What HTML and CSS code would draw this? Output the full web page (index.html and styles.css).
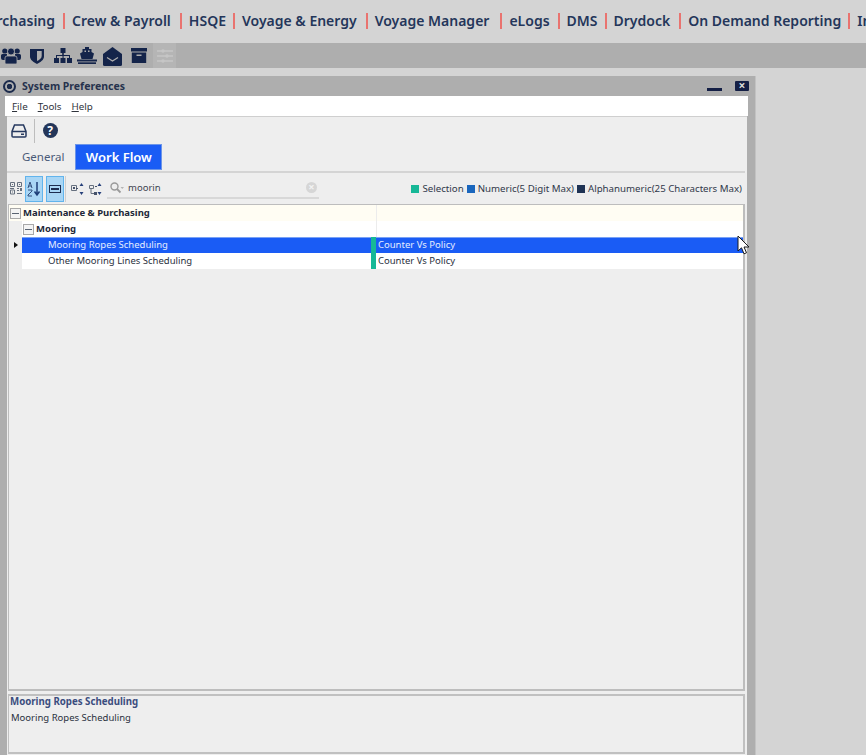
FILE: index.html
```html
<!DOCTYPE html>
<html>
  <head>
    <meta charset='utf-8'>
    <title>System Preferences</title>
    <link rel="stylesheet" href="styles.css">
  </head>
  <body>
    <nav class="topnav">
      <a class="first">Purchasing</a>
      <a class="pad9">Crew &amp; Payroll</a>
      <a>HSQE</a>
      <a class="pad9">Voyage &amp; Energy</a>
      <a class="pad11">Voyage Manager</a>
      <a class="pad8">eLogs</a>
      <a>DMS</a>
      <a class="pad9">Drydock</a>
      <a>On Demand Reporting</a>
      <a>Inventory</a>
    </nav>

    <div class="modules">
      <svg class="mod m-people" width="20" height="18" viewBox="0 0 20 18"><circle cx="3.800" cy="4" r="2.600"/><circle cx="16.200" cy="4" r="2.600"/><path d="M0 8.500q0-1.500 1.500-1.500h4.500v6H2q-2 0-2-2zM20 8.500q0-1.500-1.500-1.500H14v6h4q2 0 2-2z"/><path d="M6 9h8q2 0 2 2v5q0 1-1 1H5q-1 0-1-1v-5q0-2 2-2z" stroke="#aeaeae" stroke-width=".8"/><circle cx="10" cy="4.500" r="3.500" stroke="#aeaeae" stroke-width=".8"/></svg>
      <svg class="mod m-shield" width="14" height="16" viewBox="0 0 14 16"><path fill-rule="evenodd" d="M0 1h14v7.500c0 3.500-3.500 5.500-7 7.500-3.500-2-7-4-7-7.500zM7 3v10c2-1 4.700-2.500 4.700-5V3z"/></svg>
      <svg class="mod m-tree" width="18" height="15" viewBox="0 0 18 15"><path d="M6.500 0h5v5H9.800v2H16v3h2v5h-5v-5h2V8H9.600v2H11.500v5h-5v-5h2V8H3v2h2v5H0v-5h2V7h6.200V5H6.500z"/></svg>
      <svg class="mod m-ship" width="20" height="17" viewBox="0 0 20 17"><path fill-rule="evenodd" d="M8 0h4v2h2.500v3L17 6.500 15.500 12h-11L3 6.500 5.500 5V2H8zM7.500 3.500v1.500h1.500V3.500zM11 3.500v1.500h1.500V3.500z"/><rect x="0" y="12.500" width="20" height="2"/><rect x="1" y="15.300" width="18" height="1.700"/></svg>
      <svg class="mod m-mail" width="19" height="20" viewBox="0 0 19 20"><path d="M0 8l9.500-7L19 8v10.500a1.500 1.500 0 0 1-1.500 1.500h-16A1.500 1.500 0 0 1 0 18.500z"/><path d="M4 11.500l5.500 3.500 5.500-3.500" fill="none" stroke="#aeaeae" stroke-width="1.300"/></svg>
      <svg class="mod m-box" width="16" height="15" viewBox="0 0 16 15"><rect x="0" y="0" width="16" height="3.500"/><path fill-rule="evenodd" d="M.800 4.500h14.400V15H.800zM5.500 6.500v1.500h5V6.500z"/></svg>
      <span class="mod-off">
        <svg width="16" height="14" viewBox="0 0 16 14"><path d="M0 2h16M0 7h16M0 12h16" stroke="#c6c6c6" stroke-width="1.300"/><circle cx="6" cy="2" r="1.800" fill="#c6c6c6"/><circle cx="10" cy="7" r="1.800" fill="#c6c6c6"/><circle cx="6" cy="12" r="1.800" fill="#c6c6c6"/></svg>
      </span>
    </div>

    <div class="window">
      <div class="titlebar">
        <span class="ring"></span>
        <span class="title">System Preferences</span>
        <span class="min"></span>
        <span class="close">&#215;</span>
      </div>

      <div class="menubar">
        <span><u>F</u>ile</span>
        <span><u>T</u>ools</span>
        <span><u>H</u>elp</span>
      </div>

      <div class="content">
        <div class="tools">
          <svg width="16" height="14" viewBox="0 0 16 14"><path d="M3.500 1h9l2.500 6.500V12a1 1 0 0 1-1 1H2a1 1 0 0 1-1-1V7.500zM1 7.500h14" fill="none" stroke="#26395f" stroke-width="1.500"/><rect x="10" y="9.500" width="3" height="1.500" fill="#26395f"/></svg>
          <span class="vsep"></span>
          <span class="help">?</span>
        </div>

        <div class="tabs">
          <span class="tab">General</span>
          <span class="tab active">Work Flow</span>
        </div>

        <div class="filterbar">
          <span class="tbtn">
            <svg width="12" height="13" viewBox="0 0 12 13"><path d="M.5.500h4v4h-4zM.5 8h4v4h-4zM7.500.500h4v4h-4z" fill="none" stroke="#66707f"/><path d="M2 2h1v1H2zM2 9.500h1v1H2zM9 2h1v1H9zM7 6h2v1H7zM10 6h2v3h-2zM7 8h2v1H7zM7 11h5v1H7zM0 6h4v1H0z" fill="#66707f"/></svg>
          </span>
          <span class="tbtn on">
            <svg width="14" height="16" viewBox="0 0 14 16"><path d="M1 7l2-6 2 6M1.700 5h2.600M1 9h4v1L1 14v1h4" fill="none" stroke="#34507e"/><path d="M10 1v12M7.500 10.500l2.500 3.500 2.500-3.500" fill="none" stroke="#1f3f78" stroke-width="1.500"/></svg>
          </span>
          <span class="tbtn on">
            <svg width="12" height="8" viewBox="0 0 12 8"><rect x=".5" y=".5" width="11" height="7" fill="none" stroke="#1d2d50"/><path d="M2 3h8v2H2z" fill="#1d2d50"/></svg>
          </span>
          <span class="vsep short"></span>
          <svg class="ticon" width="13" height="14" viewBox="0 0 13 14"><path d="M.5 3.500h5v5h-5z" fill="none" stroke="#66707f"/><path d="M2 5h2v2H2zM5 6h2v1H5z" fill="#46526a"/><path d="M10.500 1l2 3h-4zM10.500 13l2-3h-4z" fill="#27407a"/></svg>
          <svg class="ticon" width="13" height="14" viewBox="0 0 13 14"><path d="M.5 3.500h4v3h-4zM2 6.500v5h3" fill="none" stroke="#66707f"/><path d="M6 4h2v1H6zM5 10h3v3H5z" fill="#46526a"/><path d="M10.500 1l2 3h-4zM10.500 13l2-3h-4z" fill="#27407a"/></svg>
          <div class="search">
            <svg width="14" height="12" viewBox="0 0 14 12"><circle cx="4.500" cy="4.500" r="3.500" fill="none" stroke="#9a9a9a" stroke-width="1.400"/><path d="M7 7l3.500 3.500" stroke="#9a9a9a" stroke-width="1.800"/><path d="M10.500 5h3.500l-1.750 2z" fill="#b4b4b4"/></svg>
            <span class="query">moorin</span>
            <span class="clear">&#215;</span>
          </div>
          <div class="legend">
            <i class="sw green"></i><span>Selection</span>
            <i class="sw blue"></i><span>Numeric(5 Digit Max)</span>
            <i class="sw navy"></i><span>Alphanumeric(25 Characters Max)</span>
          </div>
        </div>

        <div class="grid">
          <div class="row group">
            <div class="c1"><span class="box"></span><b>Maintenance &amp; Purchasing</b></div>
            <div class="c2"></div>
          </div>
          <div class="row sub">
            <div class="c1"><span class="box"></span><b>Mooring</b></div>
            <div class="c2"></div>
          </div>
          <div class="row item selected">
            <span class="arrow"></span>
            <div class="c1">Mooring Ropes Scheduling</div>
            <div class="c2">Counter Vs Policy</div>
          </div>
          <div class="row item">
            <div class="c1">Other Mooring Lines Scheduling</div>
            <div class="c2">Counter Vs Policy</div>
          </div>
        </div>

        <div class="desc">
          <div class="desc-title">Mooring Ropes Scheduling</div>
          <div class="desc-text">Mooring Ropes Scheduling</div>
        </div>
      </div>
    </div>

    <svg class="cursor" width="13" height="20" viewBox="0 0 13 20"><path d="M1 1v15l3.500-3.200 2.500 6 2.500-1-2.500-5.800h5z" fill="#fff" stroke="#1a1a1a" stroke-width="1"/></svg>
  </body>
</html>
```

FILE: styles.css
```css
* {
    box-sizing: border-box;
}
html, body {
    height: 100%;
}
body {
    margin: 0;
    height: 755px;
    overflow: hidden;
    position: relative;
    background: #d4d4d4;
    font-family: "Noto Sans", "Open Sans", sans-serif;
    font-size: 10px;
    color: #2a3140;
    display: flex;
    flex-direction: column;
}

/* top nav */
.topnav {
    height: 43px;
    flex: none;
    display: flex;
    align-items: center;
    white-space: nowrap;
    margin-left: -29px;
    padding-bottom: 2px;
    font-size: 14px;
    font-weight: 600;
    color: #24365a;
}
.topnav a {
    border-left: 2px solid #e9736f;
    height: 16px;
    line-height: 16px;
    padding: 0 7px;
}
.topnav a.first {
    border-left: 0;
    padding: 0 8px;
}
.topnav a.pad8 {
    padding-right: 8px;
}
.topnav a.pad9 {
    padding-right: 9px;
}
.topnav a.pad11 {
    padding-right: 11px;
}

/* module icons */
.modules {
    height: 25px;
    flex: none;
    background: #aeaeae;
    display: flex;
    align-items: center;
    padding-left: 1px;
}
.mod {
    fill: #14244a;
    flex: none;
}
.m-people {
    margin-right: 9px;
}
.m-shield {
    margin-right: 10px;
}
.m-tree {
    margin-right: 5px;
}
.m-ship {
    margin-right: 6px;
}
.m-mail {
    margin-right: 9px;
}
.m-box {
    margin-right: 6px;
}
.mod-off {
    width: 23px;
    height: 25px;
    background: #b5b5b5;
    display: flex;
    align-items: center;
    justify-content: center;
}

/* window */
.window {
    margin-top: 8px;
    width: 756px;
    flex: 1;
    background: #aeaeae;
    border-right: 1px solid #c2c2c2;
    display: flex;
    flex-direction: column;
    padding-right: 8px;
}
.titlebar {
    height: 20px;
    flex: none;
    display: flex;
    align-items: center;
    padding-left: 3px;
}
.ring {
    width: 13px;
    height: 13px;
    border: 2px solid #1c2b4c;
    border-radius: 50%;
    margin-right: 6px;
    background: radial-gradient(circle, #1c2b4c 0, #1c2b4c 2.500px, transparent 3px);
}
.title {
    flex: 1;
    font-size: 10.5px;
    font-weight: 700;
    color: #26324d;
}
.min {
    width: 15px;
    height: 3px;
    background: #141f45;
    margin-top: 6px;
    margin-right: 13px;
}
.close {
    width: 14px;
    height: 10px;
    background: #141f45;
    color: #d8d8d8;
    font-size: 12px;
    font-weight: 700;
    line-height: 9px;
    text-align: center;
    border-radius: 1px;
    margin-right: -2px;
}
.menubar {
    height: 20px;
    flex: none;
    margin-left: 5px;
    margin-right: -1px;
    background: #fff;
    display: flex;
    align-items: center;
    gap: 10px;
    padding-left: 7px;
    font-size: 9.8px;
    color: #30343c;
}
.content {
    flex: 1;
    margin-left: 7px;
    background: #eee;
    border-top: 1px solid #cfcfcf;
    display: flex;
    flex-direction: column;
    min-height: 0;
}
.tools {
    height: 27px;
    flex: none;
    display: flex;
    align-items: center;
    padding-left: 4px;
}
.vsep {
    width: 1px;
    height: 24px;
    background: #bdbdbd;
    margin: 0 7.500px 0 7px;
}
.help {
    width: 15px;
    height: 15px;
    border-radius: 50%;
    background: #24365a;
    color: #fff;
    font-size: 12px;
    font-weight: 700;
    line-height: 15px;
    text-align: center;
}
.tabs {
    height: 29px;
    flex: none;
    display: flex;
    align-items: stretch;
    padding: 0 0 1px 6px;
    border-bottom: 2px solid #d4d4d4;
    margin-right: 2px;
}
.tab {
    font-size: 11.5px;
    color: #4a5a78;
    padding: 0 11px 0 9px;
    line-height: 26px;
}
.tab.active {
    background: #1a5cf5;
    border: 1px solid #6c95e8;
    color: #fff;
    font-size: 13px;
    font-weight: 600;
    line-height: 24px;
    padding: 0 8px;
    width: 87px;
    text-align: center;
}
.filterbar {
    height: 31px;
    flex: none;
    display: flex;
    align-items: center;
    padding-left: 1px;
}
.tbtn {
    width: 18px;
    height: 26px;
    margin-right: 3px;
    display: flex;
    align-items: center;
    justify-content: center;
}
.tbtn:first-child {
    width: 16px;
    margin-right: 1px;
}
.tbtn.on {
    background: #a9d6f5;
    border: 1px solid #62b4ec;
}
.vsep.short {
    height: 26px;
    margin: 0 5px 0 -2px;
    background: #cfcfcf;
}
.ticon {
    margin-right: 5px;
}
.search {
    width: 212px;
    height: 21px;
    border-bottom: 2px solid #d8d8d8;
    display: flex;
    align-items: center;
    padding-left: 3px;
    gap: 4px;
    color: #3e4450;
    font-size: 9.5px;
}
.query {
    flex: 1;
}
.clear {
    width: 11px;
    height: 11px;
    border-radius: 50%;
    background: #d6d6d6;
    color: #f2f2f2;
    font-size: 11px;
    font-weight: 700;
    line-height: 10px;
    text-align: center;
    margin-right: 2px;
}
.legend {
    margin-left: auto;
    margin-right: 5px;
    display: flex;
    align-items: center;
    font-size: 9.7px;
    color: #30384a;
}
.sw {
    width: 8px;
    height: 8px;
    margin-right: 3px;
}
.legend span {
    margin-right: 3px;
}
.legend span:last-child {
    margin-right: 0;
}
.green {
    background: #17b897;
}
.blue {
    background: #1a66bd;
}
.navy {
    background: #1f3354;
}

/* tree grid */
.grid {
    flex: 1;
    min-height: 0;
    margin-left: 1px;
    margin-right: 2px;
    border: 1px solid #bdbdbd;
    border-width: 1px 2px 2px 1px;
    position: relative;
    font-size: 9.5px;
}
.row {
    height: 16px;
    display: flex;
    align-items: center;
    line-height: 16px;
    color: #2a3140;
}
.c1 {
    width: 368px;
    display: flex;
    align-items: center;
    flex: none;
}
.c2 {
    flex: 1;
    height: 100%;
}
.box {
    width: 11px;
    height: 11px;
    border: 1px solid #a8a8a8;
    background: linear-gradient(#5a6472, #5a6472) center / 7px 1px no-repeat #f4f4f4;
    margin-right: 2px;
    flex: none;
}
.group {
    background: #fffdf3;
}
.group .c1 {
    border-right: 1px solid #ececec;
    height: 100%;
    padding-left: 1px;
}
.group b, .sub b {
    font-weight: 700;
    color: #222838;
}
.sub {
    margin-left: 13px;
    background: #fff;
}
.sub .c1 {
    width: 355px;
    height: 100%;
    border-right: 1px solid #ececec;
    padding-left: 1px;
}
.item {
    margin-left: 13px;
    background: #fff;
    position: relative;
}
.item .c1 {
    width: 354px;
    height: 100%;
    padding-left: 26px;
    border-right: 5px solid #17b897;
}
.item .c2 {
    padding-left: 2px;
}
.selected {
    background: #1a5cf5;
    color: #e4edff;
    box-shadow: inset 0 1px 0 #7aa2f5;
}
.arrow {
    position: absolute;
    left: -8px;
    top: 5px;
    border-left: 4px solid #111;
    border-top: 3px solid transparent;
    border-bottom: 3px solid transparent;
}
.desc {
    height: 60px;
    flex: none;
    margin: 3px 2px 1px 1px;
    border: 1px solid #c0c0c0;
    border-width: 2px 2px 2px 1px;
    font-size: 9.5px;
    padding: 0 1px;
}
.desc-title {
    font-size: 9.700px;
    font-weight: 700;
    color: #3b4d7e;
    line-height: 12px;
}
.desc-text {
    color: #2a3140;
    line-height: 14px;
    margin-top: 3px;
    padding-left: 1px;
}
.cursor {
    position: absolute;
    left: 737px;
    top: 235px;
}
```
